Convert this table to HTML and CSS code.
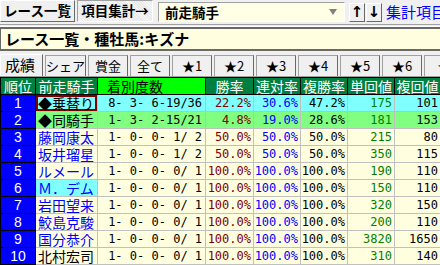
FILE: index.html
```html
<!DOCTYPE html>
<html lang="ja">
<head>
<meta charset="utf-8">
<link rel="stylesheet" href="styles.css">
</head>
<body>
<div class="toolbar">
  <div class="btn">レース一覧</div>
  <div class="btn pressed">項目集計→</div>
  <div class="combo"><span class="combo-text">前走騎手</span><span class="tri"></span></div>
  <div class="arrows"><div class="abtn">↑</div><div class="abtn">↓</div></div>
  <div class="link">集計項目&gt;</div>
</div>
<div class="sep"></div>
<div class="title">レース一覧・種牡馬:キズナ</div>
<div class="tabs">
  <div class="tab active">成績</div>
  <div class="tab">シェア</div>
  <div class="tab">賞金</div>
  <div class="tab">全て</div>
  <div class="tab">★1</div>
  <div class="tab">★2</div>
  <div class="tab">★3</div>
  <div class="tab">★4</div>
  <div class="tab">★5</div>
  <div class="tab">★6</div>
  <div class="tab">★</div>
</div>
<table class="grid">
  <colgroup>
    <col class="c-rank"><col class="c-name"><col class="c-rec"><col class="c-p"><col class="c-p2"><col class="c-p2"><col class="c-p2"><col class="c-v">
  </colgroup>
  <thead>
    <tr>
      <th>順位</th><th>前走騎手</th><th class="hl">着別度数</th><th>勝率</th><th>連対率</th><th>複勝率</th><th>単回値</th><th>複回値</th>
    </tr>
  </thead>
  <tbody>
    <tr class="r-cyan">
      <td class="rank">1</td><td class="name k sel">◆乗替り</td><td class="rec"> 8- 3- 6-19/36</td><td class="num red">22.2%</td><td class="num blue">30.6%</td><td class="num">47.2%</td><td class="num green">175</td><td class="num">101</td>
    </tr>
    <tr class="r-green">
      <td class="rank">2</td><td class="name k">◆同騎手</td><td class="rec"> 1- 3- 2-15/21</td><td class="num red">4.8%</td><td class="num blue">19.0%</td><td class="num">28.6%</td><td class="num green">181</td><td class="num">153</td>
    </tr>
    <tr>
      <td class="rank">3</td><td class="name">藤岡康太</td><td class="rec"> 1- 0- 0- 1/ 2</td><td class="num red">50.0%</td><td class="num blue">50.0%</td><td class="num">50.0%</td><td class="num green">215</td><td class="num">80</td>
    </tr>
    <tr>
      <td class="rank">4</td><td class="name">坂井瑠星</td><td class="rec"> 1- 0- 0- 1/ 2</td><td class="num red">50.0%</td><td class="num blue">50.0%</td><td class="num">50.0%</td><td class="num green">350</td><td class="num">115</td>
    </tr>
    <tr>
      <td class="rank">5</td><td class="name">ルメール</td><td class="rec"> 1- 0- 0- 0/ 1</td><td class="num red">100.0%</td><td class="num blue">100.0%</td><td class="num">100.0%</td><td class="num green">190</td><td class="num">110</td>
    </tr>
    <tr>
      <td class="rank">6</td><td class="name cy">Ｍ．デム</td><td class="rec"> 1- 0- 0- 0/ 1</td><td class="num red">100.0%</td><td class="num blue">100.0%</td><td class="num">100.0%</td><td class="num green">150</td><td class="num">110</td>
    </tr>
    <tr>
      <td class="rank">7</td><td class="name">岩田望来</td><td class="rec"> 1- 0- 0- 0/ 1</td><td class="num red">100.0%</td><td class="num blue">100.0%</td><td class="num">100.0%</td><td class="num green">320</td><td class="num">150</td>
    </tr>
    <tr>
      <td class="rank">8</td><td class="name">鮫島克駿</td><td class="rec"> 1- 0- 0- 0/ 1</td><td class="num red">100.0%</td><td class="num blue">100.0%</td><td class="num">100.0%</td><td class="num green">200</td><td class="num">110</td>
    </tr>
    <tr>
      <td class="rank">9</td><td class="name">国分恭介</td><td class="rec"> 1- 0- 0- 0/ 1</td><td class="num red">100.0%</td><td class="num blue">100.0%</td><td class="num">100.0%</td><td class="num green">3820</td><td class="num">1650</td>
    </tr>
    <tr>
      <td class="rank">10</td><td class="name k">北村宏司</td><td class="rec"> 1- 0- 0- 0/ 1</td><td class="num red">100.0%</td><td class="num blue">100.0%</td><td class="num">100.0%</td><td class="num green">310</td><td class="num">140</td>
    </tr>
  </tbody>
</table>
</body>
</html>
```

FILE: styles.css
```css
html, body {
  margin: 0;
  padding: 0;
  width: 440px;
  height: 265px;
  overflow: hidden;
  background: #f0f0f0;
  font-family: "Noto Sans CJK JP", sans-serif;
  color: #000;
}

.toolbar {
  display: flex;
  align-items: flex-start;
  height: 24px;
  white-space: nowrap;
  overflow: hidden;
}

.toolbar > * {
  flex-shrink: 0;
}

.btn {
  box-sizing: border-box;
  width: 75px;
  height: 22px;
  margin-right: 2px;
  border: 1px solid;
  border-color: #fff #696969 #696969 #fff;
  background: #f0f0f0;
  font-size: 13.5px;
  font-weight: bold;
  line-height: 19px;
  text-align: center;
}

.btn.pressed {
  width: 76px;
  background: repeating-linear-gradient(45deg, #f6f6f6 0 1px, #e8e8e8 1px 2px);
  border-color: #a0a0a0 #fff #fff #a0a0a0;
}

.combo {
  box-sizing: border-box;
  display: flex;
  align-items: center;
  justify-content: space-between;
  width: 187px;
  height: 20px;
  margin: 2px 0 0 3px;
  padding: 0 7px 0 6px;
  background: #ffffe6;
  border: 1px solid;
  border-color: #a0a0a0 #fff #fff #a0a0a0;
}

.combo-text {
  font-size: 13.5px;
  font-weight: bold;
  line-height: 18px;
}

.tri {
  width: 0;
  height: 0;
  border-left: 4px solid transparent;
  border-right: 4px solid transparent;
  border-top: 6px solid #808080;
}

.arrows {
  display: flex;
  margin: 3px 0 0 4px;
}

.abtn {
  box-sizing: border-box;
  width: 16px;
  height: 19px;
  margin-right: 1px;
  border: 1px solid;
  border-color: #fff #696969 #696969 #fff;
  background: #f0f0f0;
  font-family: "DejaVu Sans", sans-serif;
  font-weight: bold;
  font-size: 15px;
  line-height: 16px;
  text-align: center;
}

.link {
  margin: 3px 0 0 3px;
  color: #0000ff;
  font-size: 15px;
  line-height: 18px;
}

.sep {
  height: 1px;
  border-top: 1px solid #a0a0a0;
  border-bottom: 1px solid #fff;
}

.title {
  box-sizing: border-box;
  height: 24px;
  padding-left: 4px;
  background: #ffffe0;
  border-top: 2px solid #696969;
  border-bottom: 2px solid #696969;
  border-left: 1px solid #696969;
  font-size: 15px;
  font-weight: bold;
  line-height: 20px;
  white-space: nowrap;
}

.tabs {
  display: flex;
  align-items: flex-end;
  height: 25px;
  border-bottom: 1px solid #a0a0a0;
  white-space: nowrap;
  overflow: hidden;
}

.tab {
  box-sizing: border-box;
  flex: 0 0 40px;
  height: 21px;
  margin-left: 2px;
  border: 1px solid #a0a0a0;
  border-bottom: none;
  border-right-color: #696969;
  background: #f0f0f0;
  font-size: 13px;
  line-height: 20px;
  text-align: center;
}

.tab.active {
  flex: 0 0 43px;
  height: 23px;
  margin-left: 0;
  margin-bottom: -1px;
  padding-left: 4px;
  border-color: #fff #696969 transparent #fff;
  font-size: 15px;
  line-height: 20px;
  text-align: left;
}

.grid {
  width: 440px;
  table-layout: fixed;
  border-collapse: collapse;
  font-size: 14px;
  white-space: nowrap;
}

.c-rank { width: 35px; }
.c-name { width: 62px; }
.c-rec { width: 108px; }
.c-p { width: 48px; }
.c-p2 { width: 47px; }
.c-v { width: 46px; }

.grid th,
.grid td {
  height: 16px;
  padding: 0;
  line-height: 16px;
  border: 1px solid #c0c0c0;
}

.grid th {
  background: #008040;
  color: #fff;
  font-weight: normal;
  font-size: 14px;
  text-align: center;
  border-color: #000;
}

.grid th.hl {
  background: #00ff00;
  color: #000;
  text-align: left;
  padding-left: 9px;
}

.grid td {
  background: #ffffe0;
}

.r-cyan td { background: #80ffff; }
.r-green td { background: #80ff80; }

.grid td.rank {
  background: #0000ff;
  color: #fff;
  text-align: center;
  font-family: "Liberation Sans", sans-serif;
  font-size: 14px;
  border-color: #000;
}

.grid td.name {
  color: #0000ff;
  padding-left: 2px;
  font-size: 14px;
}

.grid td.name.k { color: #000; }

.grid td.name.cy { background: #80ffff; }

.grid td.name.sel {
  box-shadow: inset 0 0 0 2px #800000;
}

.grid td.rec,
.grid td.num {
  font-family: "DejaVu Sans Mono", monospace;
  font-size: 12px;
  white-space: pre;
}

.grid td.rec {
  text-align: center;
}

.grid td.num {
  text-align: right;
  padding-right: 2px;
}

.red { color: #800000; }
.blue { color: #0000ff; }
.green { color: #008000; }
```
